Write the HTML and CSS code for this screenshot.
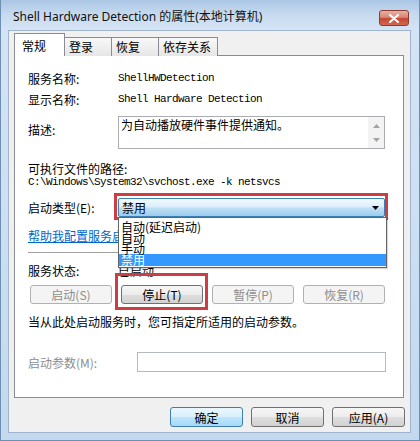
FILE: index.html
```html
<!DOCTYPE html>
<html lang="zh-CN">
<head>
  <meta charset="UTF-8" />
  <title>Shell Hardware Detection 的属性(本地计算机)</title>
  <link rel="stylesheet" href="styles.css">
</head>
<body>
  <div class="window">
    <div class="titlebar">
      <span class="title">Shell Hardware Detection 的属性(本地计算机)</span>
      <div class="close-btn">
        <svg width="12" height="9" viewBox="0 0 12 9">
          <path d="M2 1 L10 8 M10 1 L2 8" stroke="#fff" stroke-width="2.2" stroke-linecap="round"/>
        </svg>
      </div>
    </div>

    <div class="client">
      <div class="tabs">
        <div class="tab active">常规</div>
        <div class="tab">登录</div>
        <div class="tab">恢复</div>
        <div class="tab">依存关系</div>
      </div>

      <div class="panel">
        <div class="row">
          <span class="label">服务名称:</span>
          <span class="mono">ShellHWDetection</span>
        </div>
        <div class="row row-display">
          <span class="label">显示名称:</span>
          <span class="mono">Shell Hardware Detection</span>
        </div>

        <div class="row-desc">
          <span class="label desc-label">描述:</span>
          <div class="textbox">
            <div class="textbox-text">为自动播放硬件事件提供通知。</div>
            <div class="scrollbar">
              <svg width="7" height="4" viewBox="0 0 7 4"><path d="M0 4 L3.5 0 L7 4 Z" fill="#a3a3a3"/></svg>
              <svg width="7" height="4" viewBox="0 0 7 4"><path d="M0 0 L3.5 4 L7 0 Z" fill="#a3a3a3"/></svg>
            </div>
          </div>
        </div>

        <div class="path-label">可执行文件的路径:</div>
        <div class="path-value mono">C:\Windows\System32\svchost.exe -k netsvcs</div>

        <div class="row-startup">
          <span class="label">启动类型(E):</span>
          <div class="combo marked">
            <span>禁用</span>
            <svg width="7" height="4" viewBox="0 0 7 4"><path d="M0 0 L3.5 4 L7 0 Z" fill="#000"/></svg>
            <ul class="dropdown">
              <li>自动(延迟启动)</li>
              <li>自动</li>
              <li>手动</li>
              <li class="selected">禁用</li>
            </ul>
          </div>
        </div>

        <a class="help-link" href="#">帮助我配置服务启动选项。</a>
        <div class="separator"></div>

        <div class="row row-status">
          <span class="label">服务状态:</span>
          <span>已启动</span>
        </div>

        <div class="service-buttons">
          <button class="btn" disabled>启动(S)</button>
          <button class="btn marked-btn">停止(T)</button>
          <button class="btn" disabled>暂停(P)</button>
          <button class="btn" disabled>恢复(R)</button>
        </div>

        <div class="hint">当从此处启动服务时，您可指定所适用的启动参数。</div>

        <div class="row-params">
          <span class="label disabled">启动参数(M):</span>
          <div class="param-input"></div>
        </div>
      </div>

      <div class="footer">
        <button class="btn default">确定</button>
        <button class="btn">取消</button>
        <button class="btn">应用(A)</button>
      </div>
    </div>
  </div>
</body>
</html>
```

FILE: styles.css
```css
body {
  margin: 0;
  font-family: "Noto Sans CJK SC", sans-serif;
  font-size: 12px;
  color: #000;
}

.window {
  width: 420px;
  height: 441px;
  box-sizing: border-box;
  border: 1px solid #6d8fb6;
  border-top: none;
  padding: 0 8px 7px 7px;
  background: linear-gradient(to bottom, #aac6e4 0px, #c6daef 14px, #d5e4f4 30px, #c4d9ee 100%);
}

.titlebar {
  height: 30px;
  box-sizing: border-box;
  display: flex;
  align-items: flex-start;
  padding-top: 9px;
}

.title {
  margin-left: 5px;
  font-family: "Noto Sans", "Noto Sans CJK SC", sans-serif;
  font-size: 12px;
  line-height: 16px;
  color: #111;
}

.close-btn {
  margin-left: auto;
  margin-right: 2px;
  margin-top: 1px;
  width: 30px;
  height: 16px;
  box-sizing: border-box;
  border: 1px solid #8a3b33;
  border-radius: 3px;
  background: linear-gradient(to bottom, #eab1a4 0%, #d98673 45%, #c6452f 55%, #d26a55 100%);
  display: flex;
  align-items: center;
  justify-content: center;
}

.client {
  height: 403px;
  box-sizing: border-box;
  background: #f0f0f0;
  border: 1px solid #9fb5cf;
  padding: 2px 5px 0 5px;
}

/* tabs */
.tabs {
  display: flex;
  align-items: flex-end;
  height: 23px;
  margin-bottom: -1px;
}

.tab {
  height: 19px;
  min-width: 48px;
  box-sizing: border-box;
  padding: 0 6px 0 4px;
  margin-left: -1px;
  border: 1px solid #898c95;
  border-bottom: none;
  background: linear-gradient(to bottom, #f8f8f8, #e6e6e6);
  line-height: 17px;
}

.tab.active {
  position: relative;
  z-index: 1;
  height: 23px;
  min-width: 51px;
  margin-left: 0;
  padding-left: 7px;
  background: #fff;
  line-height: 23px;
}

.panel {
  height: 343px;
  box-sizing: border-box;
  margin-right: 1px;
  background: #fff;
  border: 1px solid #898c95;
  padding: 14px 18px 0 13px;
}

.row {
  display: flex;
  align-items: center;
  height: 16px;
}

.label {
  width: 90px;
  flex-shrink: 0;
}

.label.disabled {
  color: #8d8d8d;
}

.mono {
  font-family: "Liberation Mono", monospace;
  font-size: 11px;
  letter-spacing: -0.6px;
}

.row-display {
  margin-top: 5px;
}

.row-desc {
  display: flex;
  margin-top: 9px;
}

.desc-label {
  margin-top: 6px;
  line-height: 16px;
}

.textbox {
  flex: 1;
  height: 33px;
  box-sizing: border-box;
  border: 1px solid #abadb3;
  display: flex;
}

.textbox-text {
  flex: 1;
  padding: 0 2px;
  line-height: 15px;
}

.scrollbar {
  width: 16px;
  background: #f3f3f3;
  display: flex;
  flex-direction: column;
  align-items: center;
  justify-content: space-between;
  padding: 7px 0 6px;
  box-sizing: border-box;
}

.path-label {
  margin-top: 13px;
  line-height: 13px;
}

.path-value {
  line-height: 13px;
  margin-top: 1px;
}

.row-startup {
  display: flex;
  align-items: center;
  margin-top: 9px;
}

.combo {
  position: relative;
  flex: 1;
  height: 19px;
  box-sizing: border-box;
  border: 1px solid #3c7fb1;
  border-radius: 2px;
  background: linear-gradient(to bottom, #f4fafe 0%, #dbeefb 45%, #bde0f6 55%, #9ccbee 100%);
  display: flex;
  align-items: center;
  justify-content: space-between;
  padding: 0 5px 0 3px;
}

.marked::after,
.marked-btn::after {
  content: "";
  position: absolute;
  border: 3px solid #cc3d44;
}

.marked::after {
  left: -5px;
  right: -4px;
  top: -6px;
  bottom: -4px;
}

.dropdown {
  position: absolute;
  z-index: 2;
  left: -1px;
  right: -3px;
  top: 18px;
  margin: 0;
  padding: 3px 0 1px;
  list-style: none;
  background: #fff;
  border: 1px solid #646464;
  box-shadow: 1px 1px 1px rgba(0, 0, 0, 0.15);
}

.dropdown li {
  line-height: 11px;
  height: 11px;
  padding-left: 2px;
}

.dropdown li.selected {
  background: #3399ff;
  color: #fff;
  height: 12px;
}

.help-link {
  display: block;
  margin-top: 11px;
  line-height: 16px;
  color: #0066cc;
}

.separator {
  margin-top: 8px;
  border-top: 1px solid #a0a0a0;
}

.row-status {
  margin-top: 9px;
}

.service-buttons {
  display: flex;
  gap: 9px;
  margin-top: 7px;
  padding-left: 2px;
}

.btn {
  position: relative;
  height: 19px;
  width: 82px;
  box-sizing: border-box;
  padding: 0;
  font-family: "Noto Sans CJK SC", sans-serif;
  font-size: 12px;
  line-height: 17px;
  color: #000;
  border: 1px solid #707070;
  border-radius: 3px;
  background: linear-gradient(to bottom, #f6f6f6 0%, #ececec 50%, #dedede 51%, #d2d2d2 100%);
}

.btn:disabled {
  color: #8d8d8d;
  border-color: #adb2b5;
  background: #f4f4f4;
}

.marked-btn::after {
  left: -7px;
  right: -6px;
  top: -13px;
  bottom: -7px;
}

.hint {
  margin-top: 10px;
  line-height: 16px;
}

.row-params {
  display: flex;
  align-items: center;
  margin-top: 22px;
}

.row-params .label {
  width: 109px;
}

.param-input {
  flex: 1;
  height: 20px;
  box-sizing: border-box;
  margin-right: -1px;
  border: 1px solid #b5b8bd;
  background: #fff;
}

.footer {
  display: flex;
  justify-content: flex-end;
  gap: 8px;
  margin-top: 9px;
  padding-right: 0;
}

.footer .btn {
  width: 73px;
  height: 20px;
}

.btn.default {
  border-color: #3c7fb1;
  background: linear-gradient(to bottom, #eaf6fd 0%, #d9f0fc 50%, #bee6fd 51%, #a7d9f5 100%);
}
```
